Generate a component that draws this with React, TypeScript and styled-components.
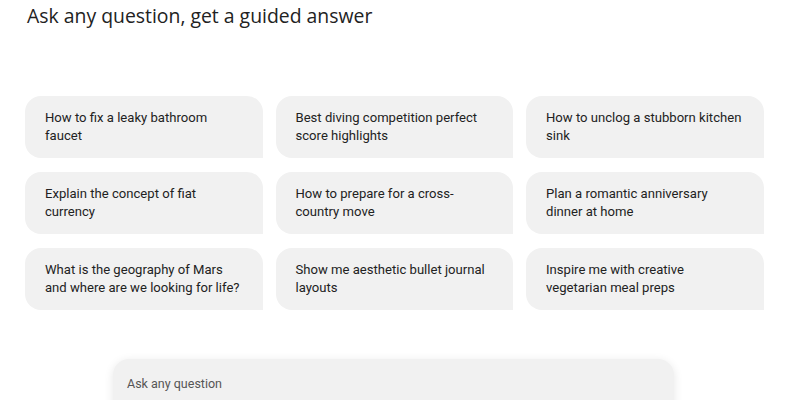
import React from "react";
import styled, { createGlobalStyle } from "styled-components";

const Global = createGlobalStyle`
  html, body { margin: 0; padding: 0; background: #ffffff; }
  body { overflow: hidden; }
`;

const Page = styled.div`
  width: 800px;
  height: 400px;
  box-sizing: border-box;
  padding: 0 37px 0 25px;
  display: flex;
  flex-direction: column;
  overflow: hidden;
`;

const Heading = styled.h1`
  margin: 3px 0 0 2px;
  font-family: "Open Sans", "Noto Sans", sans-serif;
  font-weight: 400;
  font-size: 19.4px;
  line-height: 26px;
  color: #222222;
`;

const Grid = styled.div`
  margin-top: 67px;
  display: grid;
  grid-template-columns: repeat(3, 237.5px);
  grid-auto-rows: 62px;
  column-gap: 13px;
  row-gap: 14px;
`;

const Card = styled.button`
  all: unset;
  box-sizing: border-box;
  background: #f1f1f1;
  border-radius: 16px 16px 0 16px;
  padding: 13px 20px;
  font-family: Roboto, "Liberation Sans", sans-serif;
  font-size: 13.1px;
  line-height: 18px;
  color: #222222;
  cursor: pointer;
`;

const InputRow = styled.div`
  margin-top: 49px;
  padding-left: 88px;
`;

const InputBox = styled.div`
  width: 561px;
  height: 60px;
  box-sizing: border-box;
  background: #f1f1f1;
  border-radius: 16px;
  box-shadow: 0 2px 10px rgba(0, 0, 0, 0.1);
  padding: 16px 14px;
  font-family: Roboto, "Liberation Sans", sans-serif;
  font-size: 12.5px;
  line-height: 18px;
  color: #555555;
`;

const prompts = [
  "How to fix a leaky bathroom faucet",
  "Best diving competition perfect score highlights",
  "How to unclog a stubborn kitchen sink",
  "Explain the concept of fiat currency",
  "How to prepare for a cross-country move",
  "Plan a romantic anniversary dinner at home",
  "What is the geography of Mars and where are we looking for life?",
  "Show me aesthetic bullet journal layouts",
  "Inspire me with creative vegetarian meal preps",
];

export default function App() {
  return (
    <>
      <Global />
      <Page>
        <Heading>Ask any question, get a guided answer</Heading>
        <Grid>
          {prompts.map((p) => (
            <Card key={p}>{p}</Card>
          ))}
        </Grid>
        <InputRow>
          <InputBox>Ask any question</InputBox>
        </InputRow>
      </Page>
    </>
  );
}
